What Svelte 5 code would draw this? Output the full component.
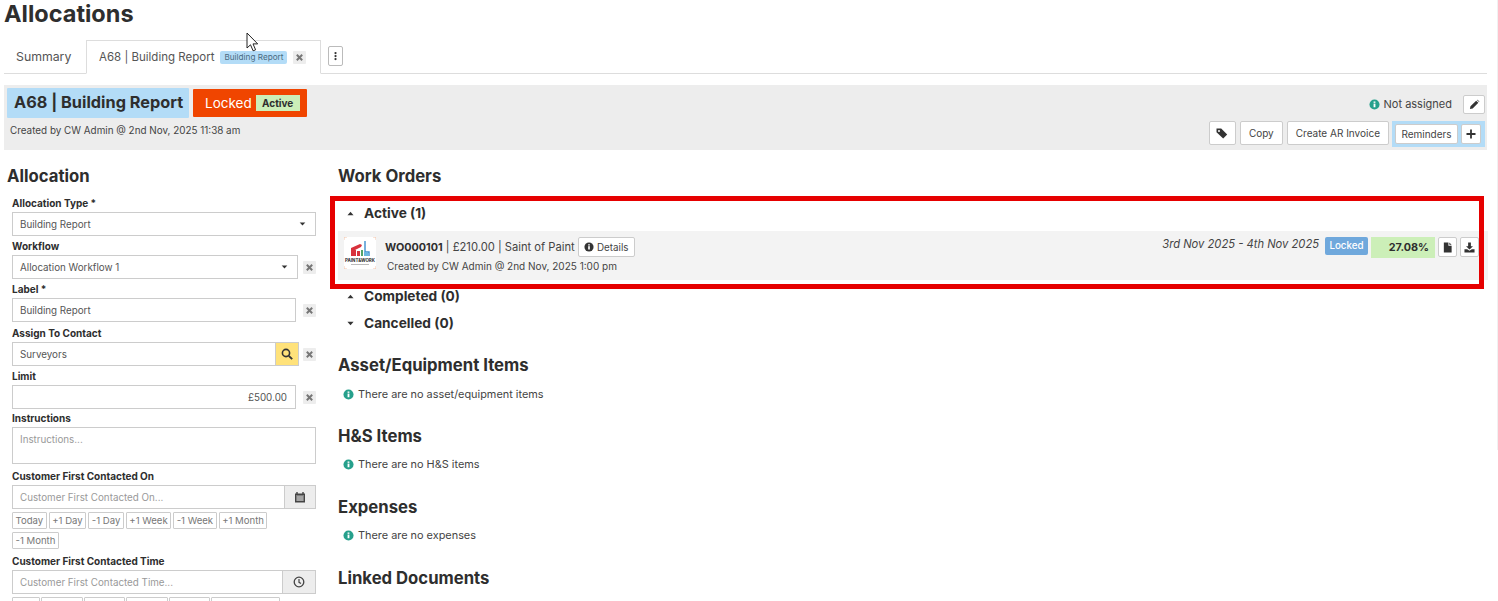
<script lang="ts">
	const dateButtons = ['Today', '+1 Day', '-1 Day', '+1 Week', '-1 Week', '+1 Month', '-1 Month'];
	// only the top edge of this row is inside the picture, so the boxes stay empty
	const timeButtonWidths = [28, 42, 41, 42, 41, 69];

	const emptySections = [
		{ title: 'Asset/Equipment Items', note: 'There are no asset/equipment items' },
		{ title: 'H&S Items', note: 'There are no H&S items' },
		{ title: 'Expenses', note: 'There are no expenses' }
	];
</script>

{#snippet info()}
	<svg class="info" viewBox="0 0 12 12" aria-hidden="true">
		<circle cx="6" cy="6" r="5.500" fill="#26a08c" />
		<rect x="5" y="5" width="2" height="4" fill="#fff" />
		<rect x="5" y="2.700" width="2" height="1.500" fill="#fff" />
	</svg>
{/snippet}

{#snippet cross()}
	<span class="clear">
		<svg viewBox="0 0 10 10" aria-hidden="true">
			<path d="M2 2l6 6M8 2l-6 6" stroke="#777" stroke-width="2.200" fill="none" />
		</svg>
	</span>
{/snippet}

{#snippet caret(up)}
	<svg class="caret" viewBox="0 0 8 5" aria-hidden="true">
		{#if up}
			<path d="M4 0.500L7.500 4.500H0.500z" fill="#333" />
		{:else}
			<path d="M4 4.500L0.500 0.500H7.500z" fill="#333" />
		{/if}
	</svg>
{/snippet}

<div class="page">
	<h1>Allocations</h1>

	<div class="tabs">
		<div class="tab summary">Summary</div>
		<div class="tab active">
			A68 | Building Report
			<span class="tab-badge">Building Report</span>
			{@render cross()}
		</div>
		<button class="kebab" type="button" aria-label="More">
			<svg viewBox="0 0 4 12" aria-hidden="true">
				<circle cx="2" cy="2" r="1.500" fill="#333" />
				<circle cx="2" cy="6" r="1.500" fill="#333" />
				<circle cx="2" cy="10" r="1.500" fill="#333" />
			</svg>
		</button>
	</div>

	<header class="banner">
		<div class="banner-left">
			<div class="banner-title">
				<span class="name">A68 | Building Report</span>
				<span class="locked">Locked <span class="active-chip">Active</span></span>
			</div>
			<div class="created">Created by CW Admin @ 2nd Nov, 2025 11:38 am</div>
		</div>
		<div class="banner-right">
			<div class="assign">
				{@render info()}
				<span class="assign-text">Not assigned</span>
				<button class="btn icon-btn" type="button" aria-label="Edit">
					<svg viewBox="0 0 12 12" aria-hidden="true">
						<path d="M1 11l.6-3L7.800 1.800l2.400 2.400L4 10.400z M8.600 1l.7-.3 2 2-.3.7z" fill="#333" />
					</svg>
				</button>
			</div>
			<div class="actions">
				<button class="btn tag-btn" type="button" aria-label="Tags">
					<svg viewBox="0 0 12 12" aria-hidden="true">
						<path d="M.5 1.500h4.700l6 6-4 4-6.700-6.300z" fill="#333" />
						<circle cx="3" cy="4" r="1" fill="#fff" />
					</svg>
				</button>
				<button class="btn" type="button">Copy</button>
				<button class="btn" type="button">Create AR Invoice</button>
				<div class="reminders">
					<button class="btn" type="button">Reminders</button>
					<button class="btn plus" type="button" aria-label="Add">
						<svg viewBox="0 0 10 10" aria-hidden="true">
							<path d="M5 .5v9M.5 5h9" stroke="#333" stroke-width="1.800" />
						</svg>
					</button>
				</div>
			</div>
		</div>
	</header>

	<div class="columns">
		<aside class="form">
			<h2>Allocation</h2>

			<div class="field first">
				<span class="label">Allocation Type *</span>
				<div class="control select">Building Report {@render caret(false)}</div>
			</div>

			<div class="field">
				<span class="label">Workflow</span>
				<div class="line">
					<div class="control select wf">Allocation Workflow 1 {@render caret(false)}</div>
					{@render cross()}
				</div>
			</div>

			<div class="field">
				<span class="label">Label *</span>
				<div class="line">
					<div class="control grow">Building Report</div>
					{@render cross()}
				</div>
			</div>

			<div class="field roomy">
				<span class="label">Assign To Contact</span>
				<div class="line">
					<div class="group contact">
						<div class="control grow">Surveyors</div>
						<span class="addon search">
							<svg viewBox="0 0 12 12" aria-hidden="true">
								<circle cx="5" cy="5" r="3.600" fill="none" stroke="#333" stroke-width="1.600" />
								<path d="M7.800 7.800l3.400 3.400" stroke="#333" stroke-width="1.900" />
							</svg>
						</span>
					</div>
					{@render cross()}
				</div>
			</div>

			<div class="field">
				<span class="label">Limit</span>
				<div class="line">
					<div class="control grow right">£500.00</div>
					{@render cross()}
				</div>
			</div>

			<div class="field snug">
				<span class="label">Instructions</span>
				<div class="control area placeholder">Instructions...</div>
			</div>

			<div class="field tall">
				<span class="label">Customer First Contacted On</span>
				<div class="group">
					<div class="control grow placeholder">Customer First Contacted On...</div>
					<span class="addon cal">
						<svg viewBox="0 0 12 12" aria-hidden="true">
							<path d="M1 2.500h10V11.500H1z" fill="#444" />
							<path d="M3 1v2M9 1v2" stroke="#444" stroke-width="1.400" />
							<path d="M2 5h8M2 7h8M2 9h8M4 5v5M6 5v5M8 5v5" stroke="#eee" stroke-width=".7" />
						</svg>
					</span>
				</div>
				<div class="quick">
					{#each dateButtons as label}
						<span class="chip">{label}</span>
					{/each}
				</div>
			</div>

			<div class="field tall">
				<span class="label">Customer First Contacted Time</span>
				<div class="group">
					<div class="control grow placeholder">Customer First Contacted Time...</div>
					<span class="addon clock">
						<svg viewBox="0 0 12 12" aria-hidden="true">
							<circle cx="6" cy="6" r="4.800" fill="none" stroke="#444" stroke-width="1.300" />
							<path d="M6 3v3.300l2 1.200" fill="none" stroke="#444" stroke-width="1.200" />
						</svg>
					</span>
				</div>
				<div class="quick time">
					{#each timeButtonWidths as width}
						<span class="chip" style="width: {width}px"></span>
					{/each}
				</div>
			</div>
		</aside>

		<main class="content">
			<h2>Work Orders</h2>

			<div class="group-head first-head">{@render caret(true)} Active (1)</div>

			<div class="order">
				<svg class="logo" viewBox="0 0 32 32" aria-hidden="true">
					<rect width="32" height="32" rx="3" fill="#fff" />
					<path d="M0 3V0h3M29 0h3v3M0 29v3h3M29 32h3v-3" fill="none" stroke="#f6c9b0" stroke-width="1" />
					<path d="M7 11l9-4 2 1-1 2-6 3H7z" fill="#d8323c" />
					<rect x="7" y="13" width="5" height="6" fill="#d8323c" />
					<rect x="13" y="14" width="3" height="5" fill="#d8323c" />
					<rect x="17" y="13" width="2" height="6" fill="#54a36a" />
					<path d="M21 4v11h4v4" fill="none" stroke="#3f8fcf" stroke-width="1.400" />
					<rect x="20" y="15" width="4" height="4" fill="#6bb6e0" />
					<text class="logo-name" x="16" y="24.500" text-anchor="middle">PAINT&amp;WORK</text>
					<rect x="7" y="27" width="18" height="1" fill="#bbb" />
				</svg>
				<div class="order-main">
					<div class="order-title">
						<span><strong>WO000101</strong> | £210.00 | Saint of Paint</span>
						<button class="btn details" type="button">
							<svg viewBox="0 0 12 12" aria-hidden="true">
								<circle cx="6" cy="6" r="5.500" fill="#333" />
								<rect x="5" y="5" width="2" height="4" fill="#fff" />
								<rect x="5" y="2.700" width="2" height="1.500" fill="#fff" />
							</svg>
							Details
						</button>
					</div>
					<div class="order-created">Created by CW Admin @ 2nd Nov, 2025 1:00 pm</div>
				</div>
				<div class="order-side">
					<em class="dates">3rd Nov 2025 - 4th Nov 2025</em>
					<span class="status">Locked</span>
					<span class="pct">27.08%</span>
					<button class="btn square" type="button" aria-label="Document">
						<svg viewBox="0 0 12 12" aria-hidden="true">
							<path d="M2 .5h5v3.500h3.500V11.500H2zM8 .5l2.500 2.500H8z" fill="#333" />
						</svg>
					</button>
					<button class="btn square" type="button" aria-label="Download">
						<svg viewBox="0 0 12 12" aria-hidden="true">
							<path d="M4.500 .5h3v4h2.300L6 8.300 2.200 4.500h2.300z" fill="#333" />
							<path d="M.5 8h3l2.500 1.500L8.500 8h3v3.500H.5z" fill="#333" />
						</svg>
					</button>
				</div>
			</div>

			<div class="group-head">{@render caret(true)} Completed (0)</div>
			<div class="group-head cancelled">{@render caret(false)} Cancelled (0)</div>

			{#each emptySections as section}
				<section class="empty">
					<h2>{section.title}</h2>
					<p>{@render info()} {section.note}</p>
				</section>
			{/each}

			<section class="empty">
				<h2>Linked Documents</h2>
			</section>
		</main>
	</div>

	<div class="highlight"></div>
	<div class="scroll-edge"></div>

	<svg class="cursor" viewBox="0 0 14 20" aria-hidden="true">
		<path d="M1 1v15l3.500-3.200 2.600 6 2.500-1-2.600-5.900h4.700z" fill="#fff" stroke="#222" stroke-width="1" />
	</svg>
</div>

<style>
	:global(body) {
		margin: 0;
		background: #fff;
		overflow: hidden;
	}

	.page {
		position: relative;
		height: 601px;
		overflow: hidden;
		padding: 0 11px 0 4px;
		box-sizing: border-box;
		font-family: Inter, 'Open Sans', sans-serif;
		font-size: 10px;
		color: #444;
	}

	h1 {
		margin: 0;
		height: 40px;
		font-size: 23.500px;
		line-height: 28px;
		font-weight: 700;
		color: #2e2e2e;
	}

	h2 {
		margin: 0;
		font-size: 16.700px;
		line-height: 20px;
		font-weight: 700;
		color: #2e2e2e;
	}

	svg {
		display: block;
		flex: none;
	}

	/* tabs */
	.tabs {
		display: flex;
		align-items: flex-start;
		height: 33px;
		border-bottom: 1px solid #ddd;
	}

	.tab {
		display: flex;
		align-items: center;
		height: 33px;
		padding: 0 0 0 12px;
		font-size: 11.500px;
		color: #555;
	}

	.tab.summary {
		width: 82px;
		box-sizing: border-box;
		font-size: 12.300px;
	}

	.tab.active {
		position: relative;
		height: 34px;
		box-sizing: border-box;
		width: 235px;
		border: 1px solid #ddd;
		border-bottom: 1px solid #fff;
		background: #fff;
		white-space: nowrap;
	}

	.tab-badge {
		margin-left: 6px;
		padding: 0 4px;
		height: 13px;
		line-height: 13px;
		font-size: 8.200px;
		background: #b3dcf7;
		color: #4a6a80;
		border-radius: 2px;
	}

	.tab .clear {
		margin-left: 6px;
	}

	.kebab {
		margin: 6px 0 0 7px;
		width: 15px;
		height: 20px;
		padding: 0;
		display: flex;
		align-items: center;
		justify-content: center;
		background: #fff;
		border: 1px solid #bbb;
		border-radius: 2px;
	}

	.kebab svg {
		width: 3px;
		height: 10px;
	}

	/* banner */
	.banner {
		display: flex;
		justify-content: space-between;
		margin-top: 11px;
		height: 65px;
		background: #ededed;
	}

	.banner-left {
		padding: 3px 0 0 3px;
	}

	.banner-title {
		display: flex;
		align-items: center;
		gap: 4px;
	}

	.name {
		display: block;
		width: 182px;
		box-sizing: border-box;
		height: 30px;
		line-height: 28px;
		padding-left: 7px;
		background: #b3dcf7;
		font-size: 16.300px;
		font-weight: 700;
		color: #2e2e2e;
		border-radius: 1px;
		white-space: nowrap;
	}

	.locked {
		display: flex;
		align-items: center;
		width: 114px;
		box-sizing: border-box;
		height: 28px;
		padding-left: 12px;
		gap: 4px;
		background: #f04500;
		color: #fff;
		font-size: 13.500px;
		border-radius: 1px;
	}

	.active-chip {
		display: block;
		width: 44px;
		box-sizing: border-box;
		text-align: center;
		height: 16px;
		line-height: 16px;
		background: #ccefb8;
		color: #2e2e2e;
		font-size: 10px;
		font-weight: 700;
	}

	.created {
		margin: 6px 0 0 3px;
		font-size: 9.900px;
		line-height: 13px;
		color: #444;
	}

	.banner-right {
		display: flex;
		flex-direction: column;
		align-items: flex-end;
		padding: 10px 2px 0 0;
	}

	.assign {
		display: flex;
		align-items: center;
		height: 19px;
		font-size: 11px;
		color: #444;
	}

	.assign .info {
		margin-right: 4px;
	}

	.assign-text {
		padding-bottom: 2px;
	}

	.assign .icon-btn {
		margin-left: 11px;
		width: 22px;
		height: 19px;
		padding: 0;
	}

	.icon-btn svg {
		width: 11px;
		height: 11px;
	}

	.info {
		width: 11px;
		height: 11px;
	}

	.btn {
		display: inline-flex;
		align-items: center;
		justify-content: center;
		box-sizing: border-box;
		padding: 0 8px 1px;
		height: 24px;
		background: #fff;
		border: 1px solid #ccc;
		border-radius: 2px;
		font-family: inherit;
		font-size: 10px;
		color: #444;
		white-space: nowrap;
	}

	.actions {
		display: flex;
		align-items: flex-start;
		gap: 4px;
		margin-top: 7px;
	}

	.tag-btn {
		width: 27px;
		padding: 0;
	}

	.tag-btn svg {
		width: 12px;
		height: 12px;
	}

	.reminders {
		display: flex;
		gap: 3px;
		height: 26px;
		box-sizing: border-box;
		padding: 3px 4px 3px 3px;
		background: #b3dcf7;
		margin-left: -1px;
	}

	.reminders .btn {
		height: 20px;
		width: 63px;
		padding: 0;
	}

	.reminders .plus {
		width: 20px;
	}

	.plus svg {
		width: 10px;
		height: 10px;
	}

	/* columns */
	.columns {
		display: flex;
		margin-top: 16px;
	}

	.form {
		flex: none;
		width: 309px;
		padding-left: 3px;
		margin-right: 22px;
	}

	.field {
		margin-top: 4px;
		padding-left: 5px;
	}

	.field.first {
		margin-top: 11px;
	}

	.field.roomy {
		margin-top: 5px;
	}

	.field.snug {
		margin-top: 3px;
	}

	.field.tall {
		margin-top: 6px;
	}

	.label {
		display: block;
		height: 15px;
		line-height: 12px;
		font-size: 10px;
		font-weight: 700;
		color: #2e2e2e;
		white-space: nowrap;
	}

	.line {
		display: flex;
		align-items: center;
		justify-content: space-between;
	}

	.group {
		display: flex;
		width: 304px;
	}

	.group.contact {
		width: 287px;
	}

	.control {
		display: flex;
		align-items: center;
		justify-content: space-between;
		box-sizing: border-box;
		height: 24px;
		padding: 0 8px 0 7px;
		border: 1px solid #ccc;
		background: #fff;
		font-size: 9.800px;
		color: #555;
		white-space: nowrap;
	}

	.control.select {
		padding-right: 9px;
	}

	.control.wf {
		width: 286px;
		flex: none;
	}

	.line > .grow {
		width: 284px;
		flex: none;
	}

	.group .grow {
		flex: 1;
		min-width: 0;
	}

	.control.right {
		justify-content: flex-end;
	}

	.control.area {
		height: 37px;
		align-items: flex-start;
		padding-top: 6px;
	}

	.placeholder {
		color: #999;
	}

	.caret {
		width: 7px;
		height: 4px;
	}

	.clear {
		display: inline-flex;
		align-items: center;
		justify-content: center;
		flex: none;
		width: 13px;
		height: 13px;
		background: #ededed;
		border-radius: 1px;
	}

	.clear svg {
		width: 9px;
		height: 9px;
	}

	.addon {
		display: flex;
		align-items: center;
		justify-content: center;
		flex: none;
		box-sizing: border-box;
		height: 24px;
		border: 1px solid #ccc;
		border-left: 0;
		background: #ededed;
	}

	.addon svg {
		width: 12px;
		height: 12px;
	}

	.addon.search {
		width: 23px;
		background: #ffe27a;
	}

	.addon.cal {
		width: 31px;
	}

	.addon.clock {
		width: 33px;
	}

	.quick {
		display: flex;
		flex-wrap: wrap;
		gap: 3px 2px;
		margin-top: 3px;
	}

	.quick.time {
		gap: 1px;
	}

	.chip {
		display: block;
		box-sizing: border-box;
		height: 17px;
		line-height: 15px;
		padding: 0 2.500px;
		border: 1px solid #ccc;
		border-radius: 1px;
		background: #fff;
		font-size: 9.600px;
		color: #777;
		white-space: nowrap;
	}

	/* right side */
	.content {
		flex: 1;
		min-width: 0;
	}

	.group-head {
		display: flex;
		align-items: center;
		gap: 10px;
		height: 16px;
		padding-left: 9px;
		margin-top: 11px;
		font-size: 13.700px;
		font-weight: 700;
		color: #2e2e2e;
	}

	.group-head .caret {
		height: 5px;
	}

	.group-head.first-head {
		margin-top: 19px;
	}

	.order {
		display: flex;
		align-items: flex-start;
		height: 49px;
		margin: 10px -1px 0 0;
		padding: 6px 0 0 6px;
		box-sizing: border-box;
		background: #f3f3f3;
	}

	.order + .group-head {
		margin-top: 8px;
	}

	.logo {
		width: 32px;
		height: 32px;
	}

	.logo-name {
		font-size: 4.400px;
		font-weight: 700;
		fill: #2b2b2b;
	}

	.order-main {
		margin-left: 9px;
	}

	.order-title {
		display: flex;
		align-items: center;
		gap: 3px;
		font-size: 11.200px;
		color: #444;
		white-space: nowrap;
	}

	.order-title strong {
		color: #2e2e2e;
		font-size: 10.800px;
	}

	.details {
		height: 20px;
		width: 57px;
		padding: 0;
		gap: 3px;
		font-size: 9.800px;
	}

	.details svg {
		width: 10px;
		height: 10px;
	}

	.order-created {
		margin: 2px 0 0 2px;
		font-size: 10px;
		line-height: 14px;
	}

	.order-side {
		display: flex;
		align-items: flex-start;
		gap: 3px;
		margin-left: auto;
		padding-right: 9px;
	}

	.dates {
		margin-right: 3px;
		font-size: 11.200px;
		line-height: 14px;
		color: #444;
	}

	.status {
		display: block;
		width: 43px;
		height: 18px;
		line-height: 18px;
		text-align: center;
		background: #6fa8dc;
		color: #fff;
		font-size: 9.800px;
		font-weight: 500;
		border-radius: 2px;
	}

	.pct {
		display: block;
		width: 64px;
		height: 21px;
		box-sizing: border-box;
		padding-right: 6px;
		line-height: 22px;
		text-align: right;
		background: #ccefb8;
		color: #2e2e2e;
		font-size: 10.800px;
		font-weight: 700;
	}

	.square {
		width: 19px;
		height: 20px;
		padding: 0;
	}

	.square svg {
		width: 11px;
		height: 11px;
	}

	.empty {
		margin-top: 23px;
	}

	.empty + .empty {
		margin-top: 25px;
	}

	.empty:nth-of-type(2) {
		margin-top: 24px;
	}

	.empty h2 {
		line-height: 22px;
	}

	.empty p {
		display: flex;
		align-items: center;
		gap: 4px;
		margin: 10px 0 0 5px;
		height: 14px;
		font-size: 10.900px;
		color: #444;
	}

	.empty:nth-of-type(1) p {
		margin-top: 11px;
	}

	/* overlays: the red annotation, the scrollbar edge and the mouse pointer */
	.highlight {
		position: absolute;
		left: 330px;
		top: 196px;
		width: 1154px;
		height: 93px;
		box-sizing: border-box;
		border: 5px solid #e60000;
		pointer-events: none;
	}

	.scroll-edge {
		position: absolute;
		left: 1497px;
		top: 0;
		width: 1px;
		height: 450px;
		background: #f1f1f1;
	}

	.cursor {
		position: absolute;
		left: 246px;
		top: 32px;
		width: 14px;
		height: 20px;
	}
</style>
